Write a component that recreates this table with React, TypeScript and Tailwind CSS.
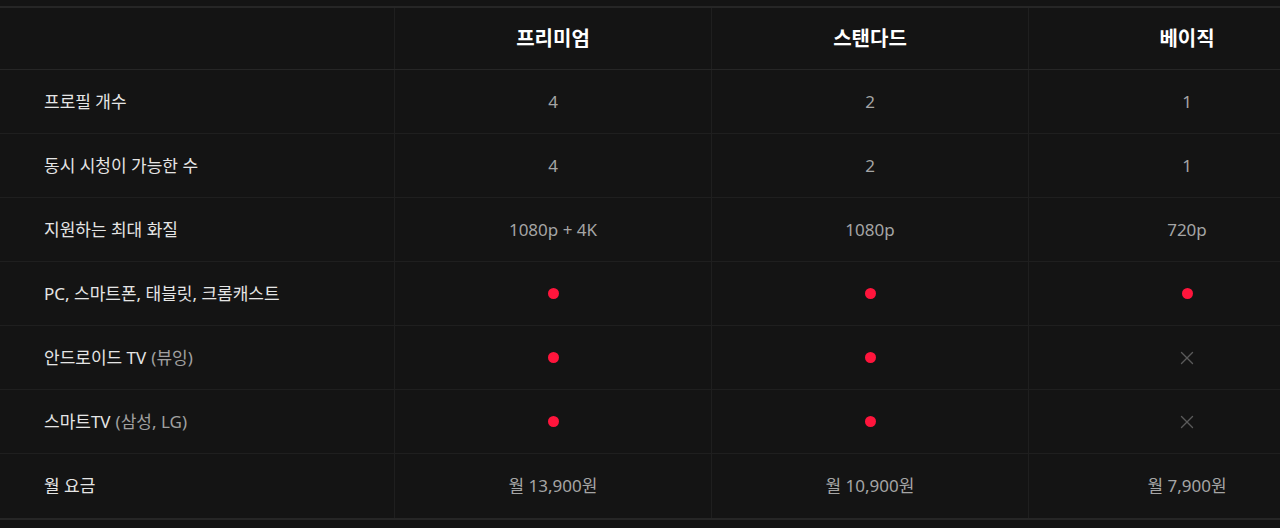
import { X } from 'lucide-react';

type Cell = string | boolean;

const rows: { label: string; sub?: string; values: Cell[] }[] = [
  { label: '프로필 개수', values: ['4', '2', '1'] },
  { label: '동시 시청이 가능한 수', values: ['4', '2', '1'] },
  { label: '지원하는 최대 화질', values: ['1080p + 4K', '1080p', '720p'] },
  { label: 'PC, 스마트폰, 태블릿, 크롬캐스트', values: [true, true, true] },
  { label: '안드로이드 TV', sub: '(뷰잉)', values: [true, true, false] },
  { label: '스마트TV', sub: '(삼성, LG)', values: [true, true, false] },
  { label: '월 요금', values: ['월 13,900원', '월 10,900원', '월 7,900원'] },
];

const plans = ['프리미엄', '스탠다드', '베이직'];

function Value({ v }: { v: Cell }) {
  if (v === true) return <span className="block w-[11px] h-[11px] rounded-full bg-[#ff153c]" />;
  if (v === false) return <X className="text-[#5a5a5a]" size={22} strokeWidth={1.5} />;
  return <span className="text-[17px] text-[#a5a5a5]">{v}</span>;
}

export default function App() {
  return (
    <div
      className="w-[1280px] h-[528px] overflow-hidden bg-[#141414] pt-[6px]"
      style={{ fontFamily: '"Noto Sans", "Noto Sans CJK KR", sans-serif' }}
    >
      <div className="w-[1345px] border-t-2 border-b-2 border-[#262626]">
        <div className="grid grid-cols-[394px_317px_317px_317px] h-[62px] border-b border-[#262626]">
          <div />
          {plans.map((p) => (
            <div key={p} className="border-l border-[#1f1f1f] flex items-center justify-center text-[20px] font-bold text-white">
              {p}
            </div>
          ))}
        </div>
        {rows.map((r, i) => (
          <div
            key={r.label}
            className={`grid grid-cols-[394px_317px_317px_317px] h-[64px] ${i < rows.length - 1 ? 'border-b border-[#1f1f1f]' : ''}`}
          >
            <div className="flex items-center pl-[44px] text-[17px] text-[#e5e5e5]">
              {r.label}
              {r.sub && <span className="ml-[5px] text-[#a0a0a0]">{r.sub}</span>}
            </div>
            {r.values.map((v, j) => (
              <div key={j} className="border-l border-[#1f1f1f] flex items-center justify-center">
                <Value v={v} />
              </div>
            ))}
          </div>
        ))}
      </div>
    </div>
  );
}
